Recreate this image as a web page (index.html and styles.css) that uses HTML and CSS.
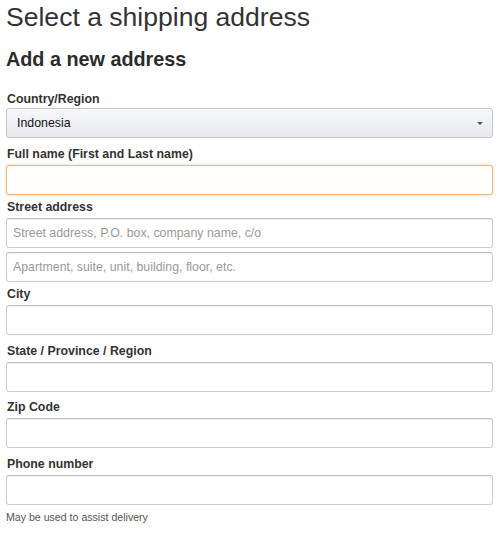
FILE: index.html
```html
<!DOCTYPE html>
<html lang="en">
<head>
<meta charset="utf-8">
<title>Select a shipping address</title>
<link rel="stylesheet" href="styles.css">
</head>
<body>
<div class="page">
  <h1 class="title">Select a shipping address</h1>
  <h2 class="subtitle">Add a new address</h2>
  <form class="form">
    <div class="field field-select">
      <label class="label" for="country">Country/Region</label>
      <button type="button" class="dropdown" id="country">
        <span class="dropdown-text">Indonesia</span>
        <span class="caret"></span>
      </button>
    </div>
    <div class="field">
      <label class="label" for="fullname">Full name (First and Last name)</label>
      <input class="input input-focus" id="fullname" type="text">
    </div>
    <div class="field field-tight">
      <label class="label" for="street1">Street address</label>
      <input class="input" id="street1" type="text" placeholder="Street address, P.O. box, company name, c/o">
      <input class="input input-second" id="street2" type="text" placeholder="Apartment, suite, unit, building, floor, etc.">
    </div>
    <div class="field field-tight">
      <label class="label" for="city">City</label>
      <input class="input" id="city" type="text">
    </div>
    <div class="field">
      <label class="label" for="state">State / Province / Region</label>
      <input class="input" id="state" type="text">
    </div>
    <div class="field field-zip">
      <label class="label" for="zip">Zip Code</label>
      <input class="input" id="zip" type="text">
    </div>
    <div class="field">
      <label class="label" for="phone">Phone number</label>
      <input class="input" id="phone" type="text">
      <p class="hint">May be used to assist delivery</p>
    </div>
  </form>
</div>
</body>
</html>
```

FILE: styles.css
```css
* {
  box-sizing: border-box;
}

html, body {
  margin: 0;
  padding: 0;
  background: #ffffff;
}

body {
  font-family: "Liberation Sans", Arial, sans-serif;
  color: #333333;
}

.page {
  padding: 0 7px 0 6px;
}

.title {
  margin: 1px 0 0;
  font-size: 26.55px;
  line-height: 32px;
  font-weight: 400;
  color: #333333;
}

.subtitle {
  margin: 14px 0 0;
  font-size: 19.8px;
  line-height: 24px;
  font-weight: 700;
  color: #2b2b2b;
}

.form {
  display: flex;
  flex-direction: column;
}

.field {
  display: flex;
  flex-direction: column;
  margin-top: 7.5px;
}

.field-select {
  margin-top: 19px;
}

.field-tight {
  margin-top: 3.5px;
}

.field-zip {
  margin-top: 6.5px;
}

.label {
  display: block;
  padding-left: 1px;
  margin-bottom: 2px;
  font-size: 12.35px;
  line-height: 18px;
  font-weight: 700;
  color: #333333;
}

.field-select .label {
  margin-bottom: 0;
}

.dropdown {
  display: flex;
  align-items: center;
  justify-content: space-between;
  width: 100%;
  height: 29.5px;
  margin: 0;
  padding: 0 9px 0 10px;
  border: 1px solid #c3c6cb;
  border-radius: 3px;
  background: linear-gradient(to bottom, #f7f8fa, #e7e9ec);
  box-shadow: inset 0 1px 0 rgba(255, 255, 255, 0.6);
  font-family: "Liberation Sans", Arial, sans-serif;
  font-size: 12.35px;
  color: #111111;
  text-align: left;
  cursor: pointer;
}

.dropdown-text {
  line-height: 18px;
}

.caret {
  width: 0;
  height: 0;
  border-left: 3px solid transparent;
  border-right: 3px solid transparent;
  border-top: 3.5px solid #555555;
  margin-top: 1px;
}

.input {
  display: block;
  width: 100%;
  height: 29.5px;
  margin: 0;
  padding: 0 7px 0 6px;
  border: 1px solid #cdcdcd;
  border-top-color: #bfbfbf;
  border-radius: 3px;
  background: #ffffff;
  box-shadow: inset 0 1px 1px rgba(0, 0, 0, 0.06);
  font-family: "Liberation Sans", Arial, sans-serif;
  font-size: 12.35px;
  color: #111111;
  outline: none;
}

.input::placeholder {
  color: #9a9a9a;
  opacity: 1;
}

.input-focus {
  border-color: #f2b57c;
  background: #fffefc;
  box-shadow: 0 0 2px 1px rgba(245, 175, 105, 0.3);
}

.input-second {
  margin-top: 4.5px;
}

.hint {
  margin: 6.5px 0 0;
  font-size: 10.6px;
  line-height: 13px;
  color: #555555;
}
```
